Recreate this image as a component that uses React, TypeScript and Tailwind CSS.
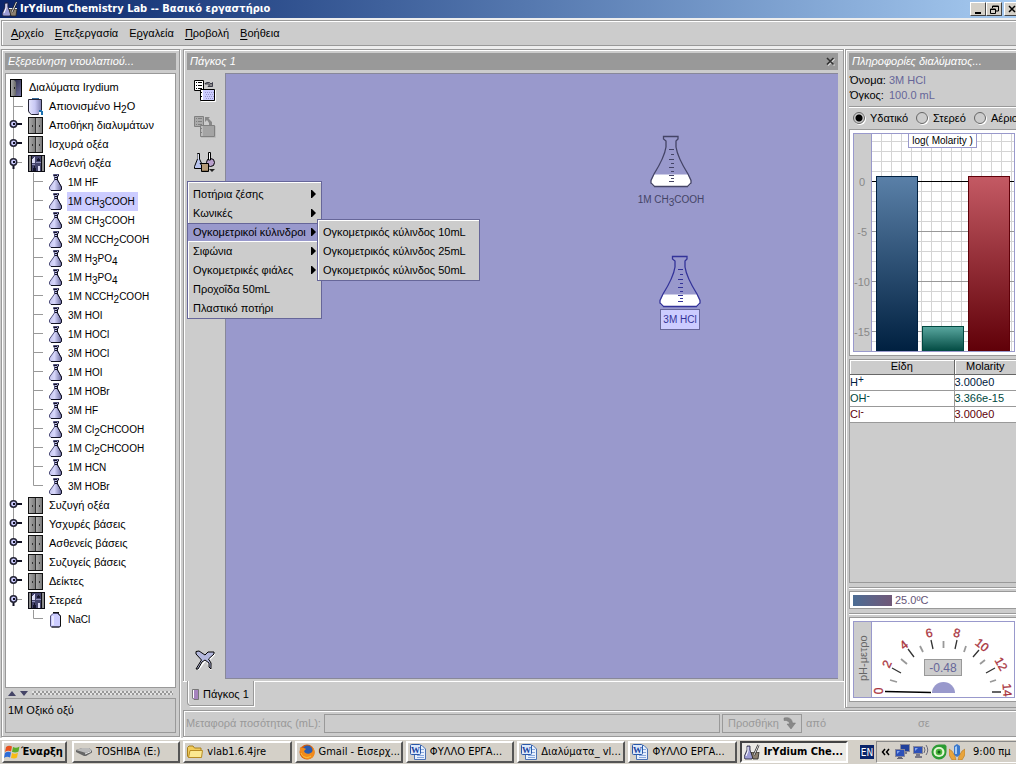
import React from "react";

const ETCHED = "border border-[#999] shadow-[inset_1px_1px_0_#fff,1px_1px_0_#fff]";
const RAISED = "border-2 border-t-white border-l-white border-r-[#555] border-b-[#555]";

/* Splits a formula such as "CH_3COOH" or "H^+" into plain, sub- and superscript parts. */
function Formula({ text }: { text: string }) {
  const parts = text.split(/([_^].)/);
  return (
    <span className="whitespace-nowrap">
      {parts.map((p, i) =>
        p.startsWith("_") ? (
          <sub key={i} className="bottom-[-3px] text-[10px] leading-none">{p.slice(1)}</sub>
        ) : p.startsWith("^") ? (
          <sup key={i} className="top-[-3px] text-[10px] leading-none">{p.slice(1)}</sup>
        ) : (
          <React.Fragment key={i}>{p}</React.Fragment>
        )
      )}
    </span>
  );
}

/* ---------- tree icons ---------- */

function RootIcon() {
  return (
    <svg width="12" height="18" viewBox="0 0 12 18" className="shrink-0">
      <defs>
        <linearGradient id="rootg" x1="0" x2="1" y1="0" y2="1"><stop offset="0" stopColor="#1c1c34" /><stop offset="1" stopColor="#7878a8" /></linearGradient>
        <linearGradient id="rootd" x1="0" x2="1"><stop offset="0" stopColor="#aaa" /><stop offset="1" stopColor="#666" /></linearGradient>
      </defs>
      <rect x="0.5" y="0.5" width="11" height="17" fill="url(#rootg)" stroke="#000" />
      <path d="M1 1H4L6 3V16L4 17H1Z" fill="url(#rootd)" />
      <path d="M4 8H5V10H4Z" fill="#222" />
    </svg>
  );
}

function CabinetIcon() {
  return (
    <svg width="16" height="17" viewBox="0 0 16 17" className="shrink-0">
      <defs>
        <linearGradient id="cabg" x1="0" x2="1"><stop offset="0" stopColor="#aaa" /><stop offset="1" stopColor="#7c7c7c" /></linearGradient>
      </defs>
      <rect x="0.5" y="0.5" width="14" height="16" fill="#999" stroke="#111" />
      <rect x="1" y="1" width="6" height="15" fill="url(#cabg)" />
      <rect x="8" y="1" width="6" height="15" fill="url(#cabg)" />
      <path d="M7.500 1V16" stroke="#333" fill="none" />
      <path d="M4 8H5V10H4ZM11 8H12V10H11Z" fill="#333" />
    </svg>
  );
}

function OpenCabinetIcon() {
  return (
    <svg width="17" height="17" viewBox="0 0 17 17" className="shrink-0">
      <rect width="17" height="17" fill="#0c0c14" />
      <path d="M1 1H3V16H1ZM14 1H16V16H14Z" fill="#8c8c8c" />
      <rect x="4" y="1" width="9" height="15" fill="#44446c" />
      <path d="M8 7H13V8H8ZM4 9H7V10H4Z" fill="#9090b8" />
      <path d="M5 3H6V2H7V8H4V4H5ZM10 11H12V16H10Z" fill="#dcdcf4" />
      <path d="M10 3H11V4H12V6H9V4H10ZM6 11H7V13H8V16H5V13H6Z" fill="#14142c" />
    </svg>
  );
}

function WaterIcon() {
  return (
    <svg width="16" height="17" viewBox="0 0 16 17" className="shrink-0">
      <defs>
        <linearGradient id="watg" x1="0" x2="1"><stop offset="0" stopColor="#e4e4fc" /><stop offset="0.500" stopColor="#c8c8f4" /><stop offset="1" stopColor="#8080b0" /></linearGradient>
      </defs>
      <path d="M4 0H11V1H4Z" fill="#356a9a" />
      <path d="M0.500 1.500H13.500V14L11.500 15.500L10 16.500H3.500L1.500 15L0.500 13Z" fill="url(#watg)" stroke="#223" />
      <path d="M11 12H14V13H15V17H13V14H11Z" fill="#1a6fae" />
      <path d="M11 14H13V17H11Z" fill="#fff" />
    </svg>
  );
}

function FlaskIcon() {
  return (
    <svg width="14" height="17" viewBox="0 0 14 17" className="shrink-0">
      <defs>
        <linearGradient id="flg" x1="0" x2="1"><stop offset="0" stopColor="#c4c4ec" /><stop offset="0.400" stopColor="#d8d8fc" /><stop offset="1" stopColor="#6c6ca0" /></linearGradient>
      </defs>
      <path d="M4.500 0.500H9.500V2L8.500 2.500V6L12.500 13V15L11.500 16.500H2L0.500 15V13L5.500 6V2.500L4.500 2Z" fill="url(#flg)" stroke="#50507c" />
      <path d="M9.500 0.500V2L8.500 2.500V6L12.500 13V15L11.500 16.500H2" fill="none" stroke="#111122" />
      <path d="M5 1.500H8M6 3.500H8M6 5.500H8" stroke="#112" fill="none" />
    </svg>
  );
}

function JarIcon() {
  return (
    <svg width="14" height="17" viewBox="0 0 14 17" className="shrink-0">
      <path d="M4 1H10V3H4Z" fill="#111" />
      <path d="M4 2.500H9L11.500 5V15L10.500 16H2.500L1.500 15V5Z" fill="#ccccff" stroke="#50507c" />
      <path d="M9 2.500L11.500 5V15L10.500 16H2.500" fill="none" stroke="#111" />
      <path d="M3 5H5V14H3Z" fill="#e8e8ff" />
    </svg>
  );
}

type Kind = "water" | "closed" | "open";

/* Connector column of a first-level row: trunk line plus expand handle. */
function Branch({ kind, last }: { kind: Kind | "pass"; last?: boolean }) {
  return (
    <svg width="22" height="19" viewBox="0 0 22 19" className="shrink-0">
      {!(last && kind === "pass") && <path d={last ? "M7.500 0V9" : "M7.500 0V19"} stroke="#999" fill="none" />}
      {kind === "water" && <path d="M8 9.500H17" stroke="#999" fill="none" />}
      {(kind === "closed" || kind === "open") && (
        <>
          <path d={kind === "open" ? "M11 8.500H16" : "M11 8H16"} stroke={kind === "open" ? "#999" : "#111122"} strokeWidth={kind === "open" ? 1 : 2} />
          {kind === "open" && <path d="M7.500 11V15" stroke="#112" strokeWidth="2" />}
          <circle cx="7.500" cy="8" r="3.200" fill="#ccccff" stroke="#223" strokeWidth="1.500" />
          <rect x="7" y="7" width="2" height="2" fill="#112" />
        </>
      )}
    </svg>
  );
}

function Twig({ last }: { last?: boolean }) {
  return (
    <svg width="21" height="19" viewBox="0 0 21 19" className="shrink-0">
      <path d={last ? "M5.500 0V8.500H15" : "M5.500 0V19M6 8.500H15"} stroke="#999" fill="none" />
    </svg>
  );
}

type Group = { name: string; kind: Kind; items?: string[]; jar?: boolean };

const TREE: Group[] = [
  { name: "Απιονισμένο H_2O", kind: "water" },
  { name: "Αποθήκη διαλυμάτων", kind: "closed" },
  { name: "Ισχυρά οξέα", kind: "closed" },
  {
    name: "Ασθενή οξέα",
    kind: "open",
    items: [
      "1M HF", "1M CH_3COOH", "3M CH_3COOH", "3M NCCH_2COOH", "3M H_3PO_4", "1M H_3PO_4",
      "1M NCCH_2COOH", "3M HOI", "1M HOCl", "3M HOCl", "1M HOI", "1M HOBr", "3M HF",
      "3M Cl_2CHCOOH", "1M Cl_2CHCOOH", "1M HCN", "3M HOBr",
    ],
  },
  { name: "Συζυγή οξέα", kind: "closed" },
  { name: "Υσχυρές βάσεις", kind: "closed" },
  { name: "Ασθενείς βάσεις", kind: "closed" },
  { name: "Συζυγείς βάσεις", kind: "closed" },
  { name: "Δείκτες", kind: "closed" },
  { name: "Στερεά", kind: "open", items: ["NaCl"], jar: true },
];

function Tree() {
  return (
    <div className="flex-1 border border-[#999] bg-white pt-1">
      <div className="flex h-[19px] items-center gap-[7px] pl-1">
        <RootIcon />
        <span>Διαλύματα Irydium</span>
      </div>
      <ul>
        {TREE.map((g, gi) => {
          const lastGroup = gi === TREE.length - 1;
          return (
            <li key={g.name}>
              <div className="flex h-[19px] items-center">
                <Branch kind={g.kind} last={lastGroup} />
                <span className="flex w-[21px] shrink-0">
                  {g.kind === "water" ? <WaterIcon /> : g.kind === "open" ? <OpenCabinetIcon /> : <CabinetIcon />}
                </span>
                <Formula text={g.name} />
              </div>
              {g.items && (
                <ul className="text-[10px]">
                  {g.items.map((it, i) => (
                    <li key={it} className="flex h-[19px] items-center">
                      <Branch kind="pass" last={lastGroup} />
                      <Twig last={i === g.items!.length - 1} />
                      <span className="flex w-[18px] shrink-0">{g.jar ? <JarIcon /> : <FlaskIcon />}</span>
                      <span className={it === "1M CH_3COOH" ? "flex h-[19px] items-center bg-[#ccccff] pr-[3px] pl-px" : "pl-px"}>
                        <Formula text={it} />
                      </span>
                    </li>
                  ))}
                </ul>
              )}
            </li>
          );
        })}
      </ul>
    </div>
  );
}

function PaneHeader({ title, close }: { title: string; close?: boolean }) {
  return (
    <h2 className="flex h-[17px] shrink-0 items-center justify-between bg-[#999] px-[3px] font-normal whitespace-nowrap text-white italic">
      {title}
      {close && (
        <button aria-label="Κλείσιμο">
          <svg width="9" height="9" viewBox="0 0 9 9">
            <path d="M2 2L8.500 8.500M8.500 2L2 8.500" stroke="#ddd" strokeWidth="1.200" />
            <path d="M1 1L7.500 7.500M7.500 1L1 7.500" stroke="#333" strokeWidth="1.700" />
          </svg>
        </button>
      )}
    </h2>
  );
}

/* ---------- toolbar ---------- */

function TransferIcon({ off }: { off?: boolean }) {
  const line = off ? "#808080" : "#000";
  const box = off ? "#a4a4a4" : "#ccccff";
  return (
    <svg width="24" height="24" viewBox="0 0 24 24">
      <path d="M1.500 1.500H10.500V11.500H1.500Z" fill={off ? "#aaa" : "#fff"} stroke={line} />
      <path d="M3 3.500H4M5 3.500H9M3 6.500H4M5 6.500H9M3 9.500H4M5 9.500H9" stroke={line} />
      <path d="M7.500 10.500H21.500V21.500H7.500Z" fill={box} stroke={line} />
      <path d="M22.500 11V22.500H8" stroke={off ? "#bbb" : "#fff"} fill="none" />
      <path d="M8 11H10V21H8Z" fill={off ? "#bbb" : "#fff"} />
      <path d="M8 13H9V14H8ZM8 17H9V18H8Z" fill={line} />
      {!off && <path d="M12 13.500H21M13 15.500H21M12 17.500H21M13 19.500H21" stroke="#9999cc" strokeDasharray="1 1" />}
      {off ? (
        <path d="M12 2H17L15.500 3.500L19 7V10H16V8L14 5L12 7Z" fill="#888" />
      ) : (
        <path d="M12 4.500L14 3.500H16.500L18 5L19.500 3.500V7.500H15L16.500 6L15.500 5H12Z" stroke="#223" fill="#888" strokeWidth="0.800" />
      )}
    </svg>
  );
}

function GlasswareIcon() {
  return (
    <svg width="24" height="24" viewBox="0 0 24 24">
      <path d="M4.500 2.500H6.500V8L10 15.500V17.500H1.500V15.500L4.500 8Z" fill="#b8c4ee" stroke="#000" />
      <path d="M5 3V8" stroke="#fff" />
      <circle cx="17.500" cy="11.500" r="4" fill="#b8a0cc" stroke="#000" />
      <path d="M15.500 1.500H17.500V9H15.500Z" fill="#fff" stroke="#000" />
      <path d="M7 12.500H15.500V20.500H8.500V14Z" fill="#b59a78" stroke="#000" />
      <path d="M9 19H15V20H9Z" fill="#8c7454" />
      <path d="M16 18H22L19 21Z" fill="#222" />
    </svg>
  );
}

function TidyIcon() {
  return (
    <svg width="24" height="24" viewBox="0 0 24 24">
      <path d="M4 20L9 11L3 5V2H7L13 6L16 3H21V5L16 10L18 19L16.500 20L12 11L5 20Z" fill="#fff" transform="translate(1 1)" />
      <path d="M3 20L8.500 11L3 5V2.500L6 2L12 6L15 3H21V5L15.500 10L18 14V20L16 18V14L12 11L9 13L5 20Z" fill="#b4b8dd" stroke="#000" />
    </svg>
  );
}

const MENU = [
  { label: "Ποτήρια ζέσης", sub: true },
  { label: "Κωνικές", sub: true },
  { label: "Ογκομετρικοί κύλινδροι", sub: true, open: true },
  { label: "Σιφώνια", sub: true },
  { label: "Ογκομετρικές φιάλες", sub: true },
  { label: "Προχοΐδα 50mL", sub: false },
  { label: "Πλαστικό ποτήρι", sub: false },
];

function GlasswareMenu() {
  return (
    <div role="menu" className="absolute top-[108px] left-0 z-10 w-[135px] border border-[#666699] bg-[#ccc] pt-[3px] shadow-[inset_1px_1px_0_#fff]">
      {MENU.map((m) => (
        <div key={m.label} className="relative">
          <button
            role="menuitem"
            className={
              m.open
                ? "flex h-[19px] w-full items-center justify-between border-t border-b border-t-[#666699] border-b-white bg-[#9999cc] px-[5px] whitespace-nowrap"
                : "flex h-[19px] w-full items-center justify-between border-t border-b border-transparent px-[5px] whitespace-nowrap"
            }
          >
            {m.label}
            {m.sub && (
              <svg width="5" height="8" viewBox="0 0 5 8" className="mb-0.5 shrink-0"><path d="M0 0H1L5 4L1 8H0Z" fill="#000" /></svg>
            )}
          </button>
          {m.open && (
            <div role="menu" className="absolute top-[-4px] left-[129px] w-[163px] border border-[#666699] bg-[#ccc] pt-[3px] shadow-[inset_1px_1px_0_#fff]">
              {["10mL", "25mL", "50mL"].map((v) => (
                <button key={v} role="menuitem" className="flex h-[19px] w-full items-center px-[5px] whitespace-nowrap">
                  {"Ογκομετρικός κύλινδος " + v}
                </button>
              ))}
            </div>
          )}
        </div>
      ))}
    </div>
  );
}

/* ---------- bench ---------- */

function BenchFlask({ color }: { color: string }) {
  return (
    <svg width="42" height="53" viewBox="0 0 42 53">
      <path d="M4 39.500H38L41 46V49L38 52H4L1 49V46Z" fill="#fff" />
      <path
        d="M13.500 1.500H28V4L26 6V12C27.500 22 33 31 38 39L41 45.500V48L37.500 51.500H4.500L1 48V45.500L4 39C9 31 14.500 22 16 12V6L13.500 4Z"
        fill="none" stroke={color} strokeWidth="1.300"
      />
      <path d="M19 14.500H24M21 19.500H24M19 24.500H24M21 28.500H24M19 32.500H24M21 36.500H24M19 40.500H24M21 43.500H24M19 46.500H24" stroke={color} />
    </svg>
  );
}

function Bench() {
  return (
    <section className="flex min-w-0 flex-1 flex-col border-r border-r-white pl-px">
      <div className="flex flex-1 flex-col border border-b-0 border-[#999] pt-[3px] pr-[5px] pb-0.5 pl-[3px] shadow-[inset_1px_1px_0_#fff]">
        <PaneHeader title="Πάγκος 1" close />
        <div className="relative mt-[3px] flex flex-1">
          <div className="flex w-[38px] shrink-0 flex-col items-center pt-1.5 pr-0.5 pb-1.5">
            <button aria-label="Μεταφορά"><TransferIcon /></button>
            <button aria-label="Επιστροφή" className="mt-3"><TransferIcon off /></button>
            <button aria-label="Σκεύη" className="mt-3"><GlasswareIcon /></button>
            <button aria-label="Καθαρισμός" className="mt-auto"><TidyIcon /></button>
          </div>
          <GlasswareMenu />
          <div className="relative flex-1 border-t border-b border-l border-[#888899] bg-[#9999cc]">
            <div className="absolute top-[61px] left-[411px] flex w-[68px] flex-col items-center text-[10px] text-[#444466]">
              <BenchFlask color="#444466" />
              <span className="mt-1 leading-4"><Formula text="1M CH_3COOH" /></span>
            </div>
            <div className="absolute top-[181px] left-[433px] flex flex-col items-center text-[10px] text-[#333399]">
              <BenchFlask color="#333399" />
              <span className="mt-px flex h-[21px] items-center border border-[#666699] bg-[#ccccff] px-0.5 whitespace-nowrap">3M HCl</span>
            </div>
          </div>
        </div>
      </div>
      <div className="flex shrink-0 pb-0.5">
        <div className="w-1 border-t border-white" />
        <button className="flex h-[25px] items-center gap-[3px] rounded-bl-[4px] border border-t-0 border-[#999] px-1 pt-0.5 shadow-[inset_1px_0_0_#fff,1px_1px_0_#fff]">
          <svg width="8" height="11" viewBox="0 0 8 11">
            <path d="M0.500 0.500H6.500V10.500H2L0.500 9Z" fill="#a583bd" stroke="#777" />
            <path d="M1 1H2V9H1Z" fill="#fff" />
          </svg>
          Πάγκος 1
        </button>
        <div className="flex-1 border-t border-white" />
      </div>
    </section>
  );
}

/* ---------- solution info ---------- */

const X_LINES = [881, 891, 901, 911, 921, 931, 941, 951, 961, 971, 981, 991, 1001, 1011];
const Y_LINES = [141, 151, 161, 171, 191, 201, 211, 221, 241, 251, 261, 271, 291, 301, 311, 321, 341];

function MolarityChart() {
  return (
    <svg viewBox="853 133 162 219" className="block w-[162px] shrink-0" role="img" aria-label="log( Molarity )">
      <defs>
        <linearGradient id="b1" x1="0" x2="0" y1="0" y2="1"><stop offset="0" stopColor="#5a80a8" /><stop offset="1" stopColor="#002040" /></linearGradient>
        <linearGradient id="b2" x1="0" x2="0" y1="0" y2="1"><stop offset="0" stopColor="#5aa8a0" /><stop offset="1" stopColor="#004840" /></linearGradient>
        <linearGradient id="b3" x1="0" x2="0" y1="0" y2="1"><stop offset="0" stopColor="#c45a64" /><stop offset="1" stopColor="#600008" /></linearGradient>
      </defs>
      <rect x="853" y="133" width="162" height="219" fill="#fff" />
      <rect x="854" y="134" width="17" height="217" fill="#ccc" />
      <g shapeRendering="crispEdges">
        {X_LINES.map((x) => <path key={x} d={`M${x + 0.5} 134V351`} stroke="#d4d4d4" />)}
        {Y_LINES.map((y) => <path key={y} d={`M872 ${y + 0.5}H1014`} stroke="#d4d4d4" />)}
        <path d="M871 231.500H1014M871 281.500H1014M871 331.500H1014" stroke="#999" />
        <path d="M871 181.500H1014" stroke="#000" />
        <path d="M871.500 134V351" stroke="#9999cc" />
        <rect x="876.500" y="176.500" width="41" height="175" fill="url(#b1)" stroke="#002040" />
        <rect x="922.500" y="326.500" width="41" height="25" fill="url(#b2)" stroke="#004840" />
        <rect x="968.500" y="176.500" width="41" height="175" fill="url(#b3)" stroke="#600008" />
        <rect x="853.500" y="133.500" width="161" height="218" fill="none" stroke="#9999cc" />
        <rect x="908.500" y="133.500" width="68" height="14" fill="#fff" stroke="#9999cc" />
      </g>
      <g fontSize="11" fontFamily="'Liberation Sans', Arial, sans-serif">
        <text x="942.500" y="144" textAnchor="middle" fontSize="10">log( Molarity )</text>
        <g fill="#888" textAnchor="end">
          <text x="865" y="186">0</text>
          <text x="867" y="236">-5</text>
          <text x="870" y="286">-10</text>
          <text x="870" y="336">-15</text>
        </g>
      </g>
    </svg>
  );
}

const PH_NUMBERS: [string, number, number, number][] = [
  ["0", 879, 691, -90], ["2", 887, 664, -65], ["4", 904, 645, -38], ["6", 929, 633, -13],
  ["8", 957, 633, 13], ["10", 982, 645, 38], ["12", 1001, 664, 60], ["14", 1007, 690, 85],
];

function PhMeter() {
  return (
    <svg viewBox="853 621 162 77" className="block w-[162px] shrink-0" role="img" aria-label="pH-μετρο">
      <rect x="853.500" y="621.500" width="161" height="76" fill="#fff" stroke="#9999cc" />
      <rect x="854" y="622" width="17" height="75" fill="#ccc" />
      <path d="M871.500 622V697" stroke="#9999cc" />
      <text transform="translate(867 681) rotate(-90)" fontSize="11" fill="#666" fontFamily="'Liberation Sans', sans-serif">pH-μετρο</text>
      <path d="M892 668L901 673M908 649L914 657M931 640L933 649M957 640L955 649M979 650L973 657M995 668L986 673M992 692H1001" stroke="#333" strokeWidth="1.300" />
      <path d="M890 680L897 682M901 659L907 664M920 646L923 652M943.500 641V648M966 646L964 652M985 660L980 664M990 682L996 680" stroke="#999" strokeWidth="1.800" />
      <path d="M885 691.500L931 692.500" stroke="#000" strokeWidth="1.400" />
      <path d="M932 693A11.500 11 0 0 1 955 693Z" fill="#9999cc" />
      {PH_NUMBERS.map(([n, x, y, r]) => (
        <text key={n} transform={`translate(${x} ${y}) rotate(${r})`} y="4" textAnchor="middle" fontSize="12" fill="#a8323c" stroke="#a8323c" strokeWidth="0.300" fontFamily="'Liberation Sans', sans-serif">
          {n}
        </text>
      ))}
      <rect x="924.500" y="659.500" width="37" height="16" fill="#ccc" stroke="#999" />
      <text x="943" y="672" textAnchor="middle" fontSize="12" fill="#666699" fontFamily="'Liberation Sans', sans-serif">-0.48</text>
    </svg>
  );
}

const SPECIES = [
  { f: "H^+", v: "3.000e0", c: "text-[#002040]" },
  { f: "OH^-", v: "3.366e-15", c: "text-[#004840]" },
  { f: "Cl^-", v: "3.000e0", c: "text-[#600008]" },
];

function Info() {
  const box = "border border-r-0 border-[#999] bg-white";
  const rule = "border-t border-[#999] shadow-[inset_0_1px_0_#fff]";
  return (
    <section className="flex w-[171px] shrink-0 flex-col overflow-hidden border border-r-0 border-[#999] pt-[3px] pl-[3px] shadow-[inset_1px_1px_0_#fff]">
      <PaneHeader title="Πληροφορίες διαλύματος..." />
      <dl className="grid grid-cols-[39px_1fr] pt-[3px] pl-px leading-[15px]">
        <dt>Όνομα:</dt><dd className="text-[#666699]">3M HCl</dd>
        <dt>Όγκος:</dt><dd className="text-[#666699]">100.0 mL</dd>
      </dl>
      <div className={"mt-[3px] flex h-[23px] shrink-0 items-center gap-2 pl-1 whitespace-nowrap " + rule}>
        {["Υδατικό", "Στερεό", "Αέριο"].map((p, i) => (
          <label key={p} className="flex shrink-0 items-center gap-[5px]">
            <input
              type="radio" name="phase" defaultChecked={i === 0}
              className="h-3 w-3 appearance-none rounded-full border border-[#666] bg-[#ccc] shadow-[1px_1px_0_#fff] checked:bg-[radial-gradient(circle,#000_0_3px,#ccc_4px)]"
            />
            {p}
          </label>
        ))}
      </div>
      <div className={box + " p-[3px] pr-0"}><MolarityChart /></div>
      <div className="mt-[3px] flex-1 border border-r-0 border-[#999]">
        <table className="w-full border-collapse bg-white leading-[15px]">
          <thead>
            <tr className="h-[14px] bg-[#ccc] leading-[13px]">
              <th className="w-[104px] border-r border-b border-[#666] font-normal shadow-[inset_1px_1px_0_#fff]">Είδη</th>
              <th className="border-b border-[#666] font-normal shadow-[inset_1px_1px_0_#fff]">Molarity</th>
            </tr>
          </thead>
          <tbody>
            {SPECIES.map((s) => (
              <tr key={s.f} className={"h-4 border-b border-[#999] " + s.c}>
                <td className="border-r border-[#999]"><Formula text={s.f} /></td>
                <td>{s.v}</td>
              </tr>
            ))}
          </tbody>
        </table>
      </div>
      <div className={"mt-1 pt-[3px] " + rule}>
        <div className={box + " flex h-[18px] items-center gap-[3px] pl-[3px] text-[#665577]"}>
          <span className="h-[11px] w-[39px] bg-linear-to-r from-[#4a6c94] to-[#705878]" />
          25.0ºC
        </div>
      </div>
      <div className={"mt-1 pt-[3px] " + rule}>
        <div className={box + " p-[3px] pr-0"}><PhMeter /></div>
      </div>
      <div className="h-[5px] shrink-0" />
    </section>
  );
}

/* ---------- window chrome ---------- */

function AppIcon() {
  return (
    <svg width="16" height="16" viewBox="0 0 16 16" className="shrink-0">
      <path d="M3 2H6V6L9 13L8 15H1L0 13L3 6Z" fill="#9c9cd4" stroke="#223" strokeWidth="0.800" />
      <path d="M4 3V7L2 12" stroke="#fff" fill="none" />
      <path d="M7 8H15L14 15H9Z" fill="#8c8070" stroke="#222" strokeWidth="0.800" />
      <path d="M7 7.500H15" stroke="#eee" />
      <path d="M10 11L14.500 1" stroke="#222" strokeWidth="2.200" />
      <path d="M10 11L14.500 1" stroke="#ddd" strokeWidth="1" />
    </svg>
  );
}

function WordIcon() {
  return (
    <svg width="16" height="16" viewBox="0 0 16 16" className="shrink-0">
      <path d="M4.500 1.500H12L15.500 5V15.500H4.500Z" fill="#e8f0fc" stroke="#4a72b4" />
      <path d="M10 5.500H14M10 8.500H14M7 11.500H14M7 13.500H14" stroke="#88a8dc" />
      <rect x="0.500" y="0.500" width="10" height="10" rx="1" fill="#dce8fa" stroke="#2a58a8" />
      <text x="5.500" y="9" textAnchor="middle" fontSize="9" fontWeight="bold" fill="#1a44a0" fontFamily="'Liberation Serif', serif">W</text>
    </svg>
  );
}

function DriveIcon() {
  return (
    <svg width="16" height="16" viewBox="0 0 16 16" className="shrink-0">
      <path d="M0 6L6 4H13L16 6.500V8.500L10 12H8L0 8Z" fill="#666" />
      <path d="M0 6L6 4H13L16 6.500L10 9Z" fill="#bbb" />
      <path d="M9 10L15 7.500" stroke="#eee" />
    </svg>
  );
}

function FolderIcon() {
  return (
    <svg width="16" height="16" viewBox="0 0 16 16" className="shrink-0">
      <path d="M0.500 3.500L2 2H6L7.500 4H14V13.500H1.500L0.500 12Z" fill="#f2cc5c" stroke="#a8801c" />
      <path d="M3 6.500H15.500L14.500 13.500H1.500Z" fill="#fce890" stroke="#b88c24" />
    </svg>
  );
}

function FirefoxIcon() {
  return (
    <svg width="16" height="16" viewBox="0 0 16 16" className="shrink-0">
      <circle cx="8" cy="8" r="7.500" fill="#d8600c" />
      <circle cx="8.500" cy="6.500" r="5" fill="#2a5cb0" />
      <path d="M1 3C3 5 5 3 7 5L5 7C6 10 10 11 13 8C15 6 13 3 12 2C17 5 17 12 12 14.500C6 17 0 12 1 3Z" fill="#f08a1c" />
      <path d="M2 9C3 13 8 15 12 12" stroke="#fbc43c" fill="none" />
    </svg>
  );
}

function WindowsLogo() {
  return (
    <svg width="16" height="16" viewBox="0 0 16 16" className="shrink-0">
      <path d="M2 3C4 1.500 6 1.500 8 2.500L7 7.500C5 6.500 3 6.500 1 8Z" fill="#e8501c" />
      <path d="M9 3C11 4 13 4 15.500 2.500L14.500 7.500C12 9 10 8.500 8 8Z" fill="#5cac28" />
      <path d="M1 9C3 7.500 5 7.500 7 8.500L6 13.500C4 12.500 2 12.500 0 14Z" fill="#2c6cd8" />
      <path d="M8 9C10 10 12 10 14 8.500L13 13.500C11 15 9 14.500 7 14Z" fill="#f8bc14" />
    </svg>
  );
}

function Monitors({ waves }: { waves?: boolean }) {
  return (
    <svg width="16" height="16" viewBox="0 0 16 16" className="shrink-0">
      {waves ? (
        <>
          <rect x="0.500" y="2.500" width="9" height="7" fill="#2c50b8" stroke="#889" />
          <path d="M2 4H5L2 7Z" fill="#88a8ec" />
          <path d="M3 10H7V12H9V14H2V12H3Z" fill="#778" />
          <path d="M11 3Q13 6 11 9M13 1Q16.500 6 13 11" stroke="#667" fill="none" />
        </>
      ) : (
        <>
          <rect x="5.500" y="0.500" width="9" height="7" fill="#20409c" stroke="#889" />
          <path d="M8 8H12V10H8Z" fill="#778" />
          <rect x="0.500" y="5.500" width="9" height="7" fill="#2c50b8" stroke="#889" />
          <path d="M2 7H5L2 10Z" fill="#88a8ec" />
          <path d="M3 13H7V14H8V15H2V14H3Z" fill="#667" />
        </>
      )}
    </svg>
  );
}

const TASKS = [
  { t: "TOSHIBA (E:)", icon: <DriveIcon /> },
  { t: "vlab1.6.4jre", icon: <FolderIcon /> },
  { t: "Gmail - Εισερχ...", icon: <FirefoxIcon /> },
  { t: "ΦΥΛΛΟ ΕΡΓΑ...", icon: <WordIcon /> },
  { t: "Διαλύματα_ vl...", icon: <WordIcon /> },
  { t: "ΦΥΛΛΟ ΕΡΓΑ...", icon: <WordIcon /> },
  { t: "IrYdium Che...", icon: <AppIcon />, active: true },
];

const WIN_FONT = "font-['DejaVu_Sans_Condensed','DejaVu_Sans',sans-serif]";

function Taskbar() {
  return (
    <footer className={"flex h-[26px] shrink-0 items-stretch border-t-2 border-white bg-[#d4d0c8] pt-px pb-px pl-0.5 text-[11px] " + WIN_FONT}>
      <button className={"flex w-[65px] shrink-0 items-center gap-px bg-[#d4d0c8] font-bold " + RAISED}>
        <WindowsLogo />
        Έναρξη
      </button>
      <div className="ml-[5px] flex min-w-0 flex-1 gap-[3px]">
        {TASKS.map((k, i) => (
          <button
            key={i}
            className={
              k.active
                ? "flex min-w-0 flex-1 items-center gap-1 overflow-hidden border-2 border-t-[#444] border-r-white border-b-white border-l-[#444] bg-[#ebe9e4] pl-0.5 font-bold whitespace-nowrap"
                : "flex min-w-0 flex-1 items-center gap-1 overflow-hidden pl-0.5 whitespace-nowrap " + RAISED
            }
          >
            {k.icon}
            {k.t}
          </button>
        ))}
      </div>
      <span className="my-1 mr-0.5 ml-3 flex w-[14px] shrink-0 items-center justify-center bg-[#0a246a] text-[10px] text-white">EN</span>
      <div className="flex w-[140px] shrink-0 items-center gap-0.5 border border-r-0 border-[#888] border-b-white pl-1 whitespace-nowrap">
        <svg width="12" height="8" viewBox="0 0 12 8" className="shrink-0"><path d="M4 1L1.500 4L4 7M8 1L5.500 4L8 7" stroke="#000" strokeWidth="1.500" fill="none" /></svg>
        <Monitors />
        <Monitors waves />
        <svg width="16" height="16" viewBox="0 0 16 16" className="shrink-0">
          <path d="M0.500 8A7.500 7.500 0 0 1 8 0.500H14L15.500 2V8A7.500 7.500 0 0 1 0.500 8Z" fill="#2c9c34" />
          <ellipse cx="8" cy="8" rx="5.500" ry="5" fill="#e8f8d8" />
          <circle cx="8" cy="8" r="3.300" fill="#4cb83c" />
          <circle cx="8" cy="8" r="1.500" fill="#145c1c" />
        </svg>
        <svg width="16" height="16" viewBox="0 0 16 16" className="shrink-0">
          <path d="M5 2L8 0L11 2V11L8 13L5 11Z" fill="#3a78cc" />
          <path d="M6 3L8 2V10L6 10Z" fill="#a8ccf4" />
          <path d="M0 5L3 7L6 12L7 16H3L0 11ZM16 5L13 7L10 12L9 16H13L16 11Z" fill="#e8a43c" stroke="#a86c1c" strokeWidth="0.500" />
        </svg>
        <span className="ml-1.5">9:00 πμ</span>
      </div>
    </footer>
  );
}

const MENUBAR = [["", "Α", "ρχείο"], ["", "Ε", "πεξεργασία"], ["Ε", "ρ", "γαλεία"], ["", "Π", "ροβολή"], ["", "Β", "οήθεια"]];

export default function App() {
  const winBtn = "flex h-[14px] w-4 items-center justify-center border border-t-white border-l-white border-r-[#444] border-b-[#444] bg-[#d4d0c8]";
  return (
    <div className="flex min-h-screen flex-col overflow-hidden bg-[#ccc] font-['Liberation_Sans',Arial,sans-serif] text-[11px] text-black">
      <header className="flex h-[18px] shrink-0 items-center bg-linear-to-r from-[#0a246a] to-[#a6caf0] pl-0.5">
        <AppIcon />
        <h1 className={"ml-0.5 flex-1 text-[11px] font-bold whitespace-nowrap text-white " + WIN_FONT}>IrYdium Chemistry Lab -- Βασικό εργαστήριο</h1>
        <button aria-label="Ελαχιστοποίηση" className={winBtn}>
          <svg width="8" height="9" viewBox="0 0 8 9"><path d="M1 7H7V9H1Z" /></svg>
        </button>
        <button aria-label="Επαναφορά" className={winBtn}>
          <svg width="9" height="9" viewBox="0 0 9 9"><path d="M2.500 3V1H8.500V6H6M2.500 1.500H8.500M0.500 4H5.500V8.500H0.500ZM0.500 4.500H5.500" fill="none" stroke="#000" /></svg>
        </button>
        <button aria-label="Κλείσιμο" className={winBtn + " -mr-1 ml-0.5"}>
          <svg width="8" height="8" viewBox="0 0 8 8"><path d="M1 1L7 7M7 1L1 7" stroke="#000" strokeWidth="1.500" /></svg>
        </button>
      </header>
      <div className="bg-[#eee] pt-0.5 pb-[3px] pl-px">
        <nav className="flex h-[26px] items-center gap-[11px] border border-r-0 border-[#999] bg-[#ccc] pl-[9px] shadow-[inset_1px_1px_0_#fff]">
          {MENUBAR.map(([a, u, b]) => (
            <button key={b}>{a}<span className="underline underline-offset-2">{u}</span>{b}</button>
          ))}
        </nav>
      </div>
      <main className="flex flex-1 pl-px">
        <aside className={"mb-px flex w-[179px] shrink-0 flex-col p-[3px] " + ETCHED}>
          <PaneHeader title="Εξερεύνηση ντουλαπιού..." />
          <div className="mt-[3px] flex flex-1 flex-col">
            <Tree />
            <div className="flex h-[10px] items-center gap-1 px-[3px]">
              <svg width="20" height="5" viewBox="0 0 20 5"><path d="M0 5L4 0L8 5ZM12 0H20L16 5Z" fill="#446" /></svg>
              <span className="h-1 flex-1 bg-[conic-gradient(#999_25%,#e4e4e4_0_50%,#999_0_75%,#e4e4e4_0)] bg-[size:4px_4px]" />
            </div>
            <p className="h-[35px] border border-[#999] px-0.5 pt-[3px]">1M Οξικό οξύ</p>
          </div>
        </aside>
        <div className="ml-0.5 flex min-w-0 flex-1 flex-col">
          <div className="flex flex-1">
            <Bench />
            <Info />
          </div>
          <form className="mt-0.5 mb-px ml-px flex h-[27px] shrink-0 items-center border border-r-0 border-[#999] pl-0.5 whitespace-nowrap text-[#999] shadow-[inset_1px_1px_0_#fff,0_1px_0_#fff]">
            <label htmlFor="amount" className="w-[138px]">Μεταφορά ποσότητας (mL):</label>
            <input id="amount" type="text" disabled className="h-[19px] min-w-0 flex-1 border border-[#999] bg-[#ccc] px-1" />
            <button type="button" disabled className="ml-0.5 flex h-[19px] w-[80px] items-center justify-center gap-1 border border-[#999]">
              Προσθήκη
              <svg width="13" height="13" viewBox="0 0 13 13"><path d="M1 1C5 0 9 1 9.500 6H12.500L8 12L4 7H6.500C6.500 4.500 4 3 1 3.500Z" fill="#888" stroke="#777" strokeWidth="0.500" /></svg>
            </button>
            <span className="ml-1 w-[112px]">από</span>
            <span className="w-[98px]">σε</span>
          </form>
        </div>
      </main>
      <Taskbar />
    </div>
  );
}
